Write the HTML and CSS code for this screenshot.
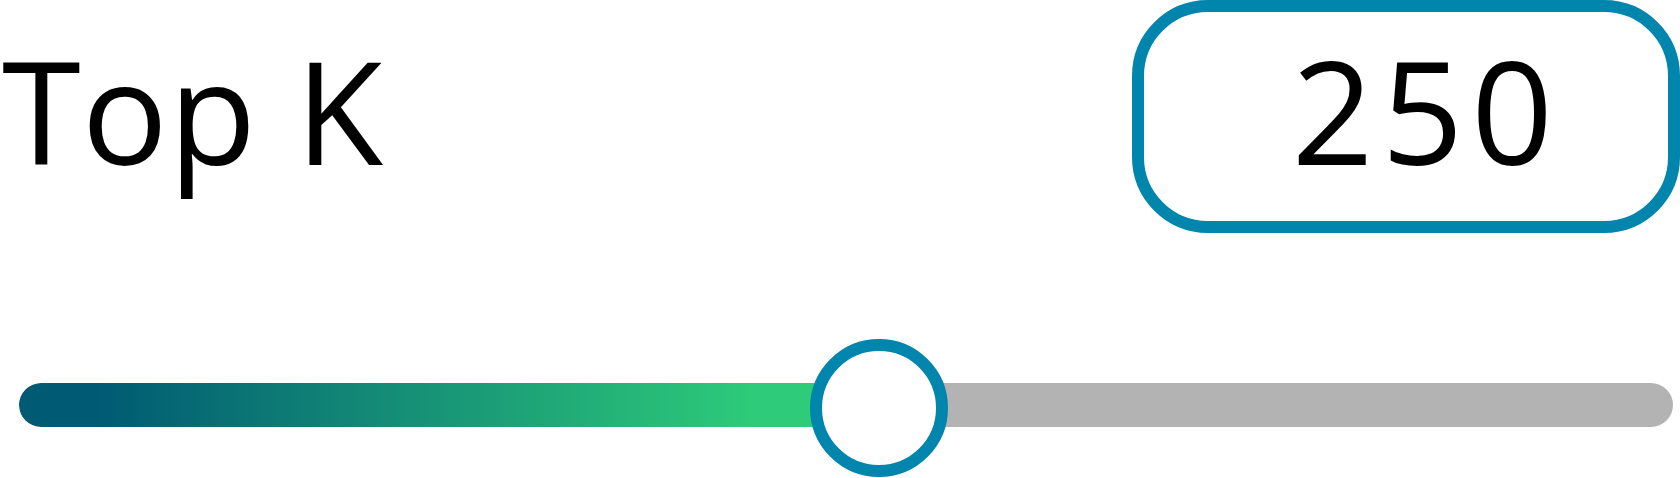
FILE: index.html
```html
<!DOCTYPE html>
<html lang="en">
<head>
    <meta charset="UTF-8">
    <meta name="viewport" content="width=device-width, initial-scale=1.0">
    <title>Top K</title>
    <link rel="stylesheet" href="styles.css">
</head>
<body>
    <div class="setting">
        <!-- label and current value -->
        <div class="setting-head">
            <span class="setting-label">Top K</span>
            <div class="value-box">250</div>
        </div>

        <!-- slider: fill runs up to the thumb -->
        <div class="slider" style="--pct: 52%;">
            <div class="track">
                <div class="track-fill"></div>
            </div>
            <div class="thumb"></div>
        </div>
    </div>
</body>
</html>
```

FILE: styles.css
```css
body {
    margin: 0;
    font-family: 'Open Sans', 'Noto Sans', sans-serif;
    background: #fff;
    color: #000;
}

.setting-head {
    display: flex;
    justify-content: space-between;
    align-items: flex-start;
    height: 233px;
    padding-left: 2px;
}

.setting-label {
    font-size: 143px;
    line-height: 196px;
    padding-top: 12px;
    letter-spacing: 1px;
}

.value-box {
    box-sizing: border-box;
    width: 548px;
    height: 233px;
    border: 12px solid #0085ad;
    border-radius: 76px;
    font-size: 143px;
    line-height: 196px;
    letter-spacing: 8px;
    text-align: center;
    padding-left: 41px;
}

.slider {
    position: relative;
    box-sizing: border-box;
    height: 138px;
    padding-top: 44px;
    margin: 106px 7px 0 19px;
}

.track {
    height: 44px;
    border-radius: 22px;
    background: #b3b3b3;
    overflow: hidden;
}

.track-fill {
    width: var(--pct);
    height: 100%;
    border-radius: 22px 0 0 22px;
    background: linear-gradient(to right, #005a73 9%, #2ecc7a 86%);
}

.thumb {
    position: absolute;
    top: 0;
    left: calc(var(--pct) - 69px);
    box-sizing: border-box;
    width: 138px;
    height: 138px;
    border: 12px solid #0085ad;
    border-radius: 50%;
    background: #fff;
}
```
